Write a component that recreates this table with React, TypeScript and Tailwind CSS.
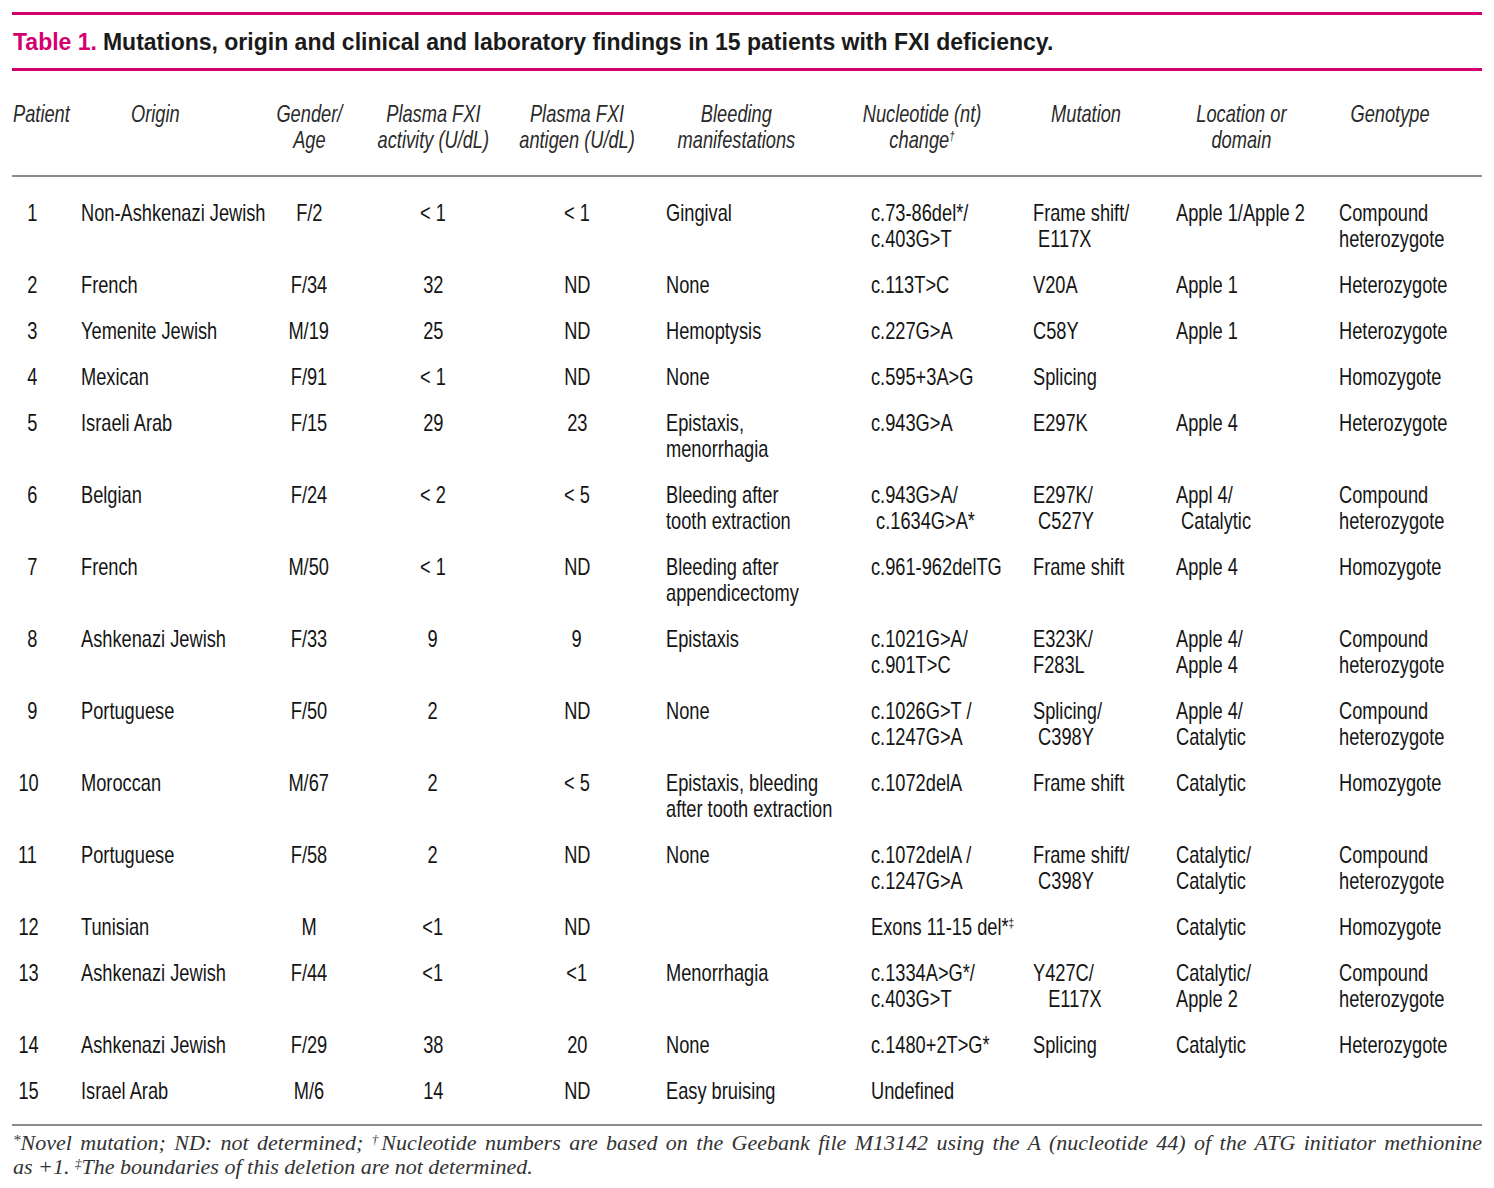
import type { ReactNode } from "react"

const sans = "font-['Liberation_Sans',Arial,sans-serif]"

const cols =
  "grid grid-cols-[66px_190px_82px_166px_122px_223px_162px_143px_163px_153px]"

// condensed look: the reference uses a narrow gothic, we squeeze Liberation Sans
const Sq = ({ o, children }: { o: "l" | "c" | "r"; children: ReactNode }) => (
  <span
    className={`inline-block scale-x-[0.76] ${
      o === "l" ? "origin-left" : o === "c" ? "origin-center" : "origin-right"
    }`}
  >
    {children}
  </span>
)

const Sup = ({ children }: { children: ReactNode }) => (
  <span className="text-[13px] leading-none align-top relative top-[2px]">{children}</span>
)

type Row = [string, string, string, string, string, string, ReactNode, string, string, string]

const rows: Row[] = [
  ["1", "Non-Ashkenazi Jewish", "F/2", "< 1", "< 1", "Gingival", "c.73-86del*/\nc.403G>T", "Frame shift/\n E117X", "Apple 1/Apple 2", "Compound\nheterozygote"],
  ["2", "French", "F/34", "32", "ND", "None", "c.113T>C", "V20A", "Apple 1", "Heterozygote"],
  ["3", "Yemenite Jewish", "M/19", "25", "ND", "Hemoptysis", "c.227G>A", "C58Y", "Apple 1", "Heterozygote"],
  ["4", "Mexican", "F/91", "< 1", "ND", "None", "c.595+3A>G", "Splicing", "", "Homozygote"],
  ["5", "Israeli Arab", "F/15", "29", "23", "Epistaxis,\nmenorrhagia", "c.943G>A", "E297K", "Apple 4", "Heterozygote"],
  ["6", "Belgian", "F/24", "< 2", "< 5", "Bleeding after\ntooth extraction", "c.943G>A/\n c.1634G>A*", "E297K/\n C527Y", "Appl 4/\n Catalytic", "Compound\nheterozygote"],
  ["7", "French", "M/50", "< 1", "ND", "Bleeding after\nappendicectomy", "c.961-962delTG", "Frame shift", "Apple 4", "Homozygote"],
  ["8", "Ashkenazi Jewish", "F/33", "9", "9", "Epistaxis", "c.1021G>A/\nc.901T>C", "E323K/\nF283L", "Apple 4/\nApple 4", "Compound\nheterozygote"],
  ["9", "Portuguese", "F/50", "2", "ND", "None", "c.1026G>T /\nc.1247G>A", "Splicing/\n C398Y", "Apple 4/\nCatalytic", "Compound\nheterozygote"],
  ["10", "Moroccan", "M/67", "2", "< 5", "Epistaxis, bleeding\nafter tooth extraction", "c.1072delA", "Frame shift", "Catalytic", "Homozygote"],
  ["11", "Portuguese", "F/58", "2", "ND", "None", "c.1072delA /\nc.1247G>A", "Frame shift/\n C398Y", "Catalytic/\nCatalytic", "Compound\nheterozygote"],
  ["12", "Tunisian", "M", "<1", "ND", "", <>Exons 11-15 del*<Sup>‡</Sup></>, "", "Catalytic", "Homozygote"],
  ["13", "Ashkenazi Jewish", "F/44", "<1", "<1", "Menorrhagia", "c.1334A>G*/\nc.403G>T", "Y427C/\n   E117X", "Catalytic/\nApple 2", "Compound\nheterozygote"],
  ["14", "Ashkenazi Jewish", "F/29", "38", "20", "None", "c.1480+2T>G*", "Splicing", "Catalytic", "Heterozygote"],
  ["15", "Israel Arab", "M/6", "14", "ND", "Easy bruising", "Undefined", "", "", ""],
]

const cellCls = ["", "pl-[3px]", "flex justify-center", "flex justify-center", "flex justify-center", "pl-[28px]", "pl-[10px]", "pl-[10px]", "pl-[10px]", "pl-[10px]"]
const cellOrigin: ("l" | "c" | "r")[] = ["r", "l", "c", "c", "c", "l", "l", "l", "l", "l"]

export default function App() {
  return (
    <div className="w-[1494px] h-[1188px] bg-white px-[12px] pt-[12px]">
      <div className="h-[3px] bg-[#d4006e]" />
      <div className={`h-[53px] flex items-center pt-[1px] pl-[1px] ${sans} font-bold text-[23px] text-[#1a1a1a]`}>
        <span className="text-[#d4006e]">Table 1.</span>
        <span className="ml-[6px]">
          Mutations, origin and clinical and laboratory findings in 15 patients with FXI deficiency.
        </span>
      </div>
      <div className="h-[3px] bg-[#d4006e]" />

      <div className={`${cols} ${sans} italic text-[24px] leading-[26px] text-[#2a2a2a] pt-[30px] pb-[22px] whitespace-nowrap`}>
        <div className="pl-[1px]"><Sq o="l">Patient</Sq></div>
        <div className="pl-[53px]"><Sq o="l">Origin</Sq></div>
        <div className="flex justify-center text-center"><Sq o="c">Gender/<br />Age</Sq></div>
        <div className="flex justify-center text-center"><Sq o="c">Plasma FXI<br />activity (U/dL)</Sq></div>
        <div className="flex justify-center text-center"><Sq o="c">Plasma FXI<br />antigen (U/dL)</Sq></div>
        <div className="pl-[28px] pr-[55px] flex justify-center text-center"><Sq o="c">Bleeding<br />manifestations</Sq></div>
        <div className="pr-[40px] flex justify-center text-center"><Sq o="c">Nucleotide (nt)<br />change<Sup>†</Sup></Sq></div>
        <div className="pr-[17px] flex justify-center text-center"><Sq o="c">Mutation</Sq></div>
        <div className="pr-[12px] flex justify-center text-center"><Sq o="c">Location or<br />domain</Sq></div>
        <div className="pr-[30px] flex justify-center text-center"><Sq o="c">Genotype</Sq></div>
      </div>
      <div className="h-[2px] bg-[#8c8c8c]" />

      <div className={`${sans} text-[24px] leading-[26px] text-[#151515] pt-[13px] pb-[10px]`}>
        {rows.map((r) => (
          <div key={r[0]} className={`${cols} py-[10px]`}>
            <div>
              <div className="w-[25px] text-right">
                <Sq o="r">{r[0]}</Sq>
              </div>
            </div>
            {r.slice(1).map((c, i) => (
              <div key={i} className={`${cellCls[i + 1]} whitespace-pre`}>
                {c !== "" && <Sq o={cellOrigin[i + 1]}>{c}</Sq>}
              </div>
            ))}
          </div>
        ))}
      </div>
      <div className="h-[2px] bg-[#8c8c8c]" />

      <div className="pt-[5px] font-['Liberation_Serif','Times_New_Roman',serif] italic text-[22px] leading-[24px] text-[#333]">
        <div className="text-justify [text-align-last:justify] pl-[1px]">
          <span className="text-[15px] leading-none align-top relative top-[2px]">*</span>Novel mutation; ND: not determined; <span className="text-[13px] leading-none align-top relative top-[2px]">†</span>Nucleotide numbers are based on the Geebank file M13142 using the A (nucleotide 44) of the ATG initiator methionine
        </div>
        <div className="pl-[1px]">
          as +1. <span className="text-[13px] leading-none align-top relative top-[2px]">‡</span>The boundaries of this deletion are not determined.
        </div>
      </div>
    </div>
  )
}
